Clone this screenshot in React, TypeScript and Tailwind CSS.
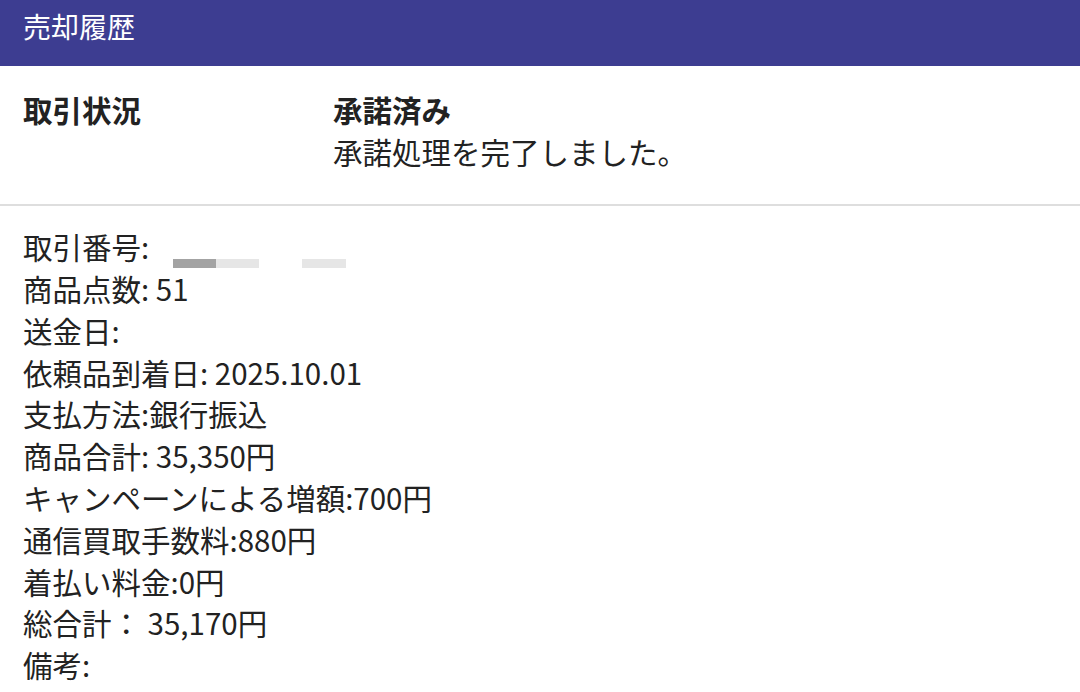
import React from 'react';

const rows: string[] = [
  '商品点数: 51',
  '送金日:',
  '依頼品到着日: 2025.10.01',
  '支払方法:銀行振込',
  '商品合計: 35,350円',
  'キャンペーンによる増額:700円',
  '通信買取手数料:880円',
  '着払い料金:0円',
  '総合計： 35,170円',
  '備考:',
];

export default function App() {
  return (
    <div
      className="w-[1080px] h-[692px] overflow-hidden bg-white text-[#222]"
      style={{ fontFamily: '"Noto Sans CJK JP", "Noto Sans", sans-serif' }}
    >
      {/* Header */}
      <div className="h-[66px] bg-[#3d3d91] flex items-center px-[23px] pb-[14px]">
        <h1 className="text-white text-[28px] leading-none">売却履歴</h1>
      </div>

      {/* Status */}
      <div className="flex px-[23px] pt-[22px] pb-[32px] border-b-2 border-[#dedede] text-[29.5px] leading-[42px]">
        <div className="w-[310px] font-bold">取引状況</div>
        <div className="flex flex-col">
          <span className="font-bold">承諾済み</span>
          <span>承諾処理を完了しました。</span>
        </div>
      </div>

      {/* Details */}
      <div className="px-[23px] pt-[20px] text-[29.5px] leading-[41.8px]">
        <div className="flex items-start">
          <span>取引番号:</span>
          <span className="ml-[24px] mt-[33px] flex">
            <span className="w-[43px] h-[9px] bg-[#a3a3a3]" />
            <span className="w-[43px] h-[9px] bg-[#e6e6e6]" />
            <span className="ml-[43px] w-[44px] h-[9px] bg-[#e6e6e6]" />
          </span>
        </div>
        {rows.map((r) => (
          <div key={r}>{r}</div>
        ))}
      </div>
    </div>
  );
}
